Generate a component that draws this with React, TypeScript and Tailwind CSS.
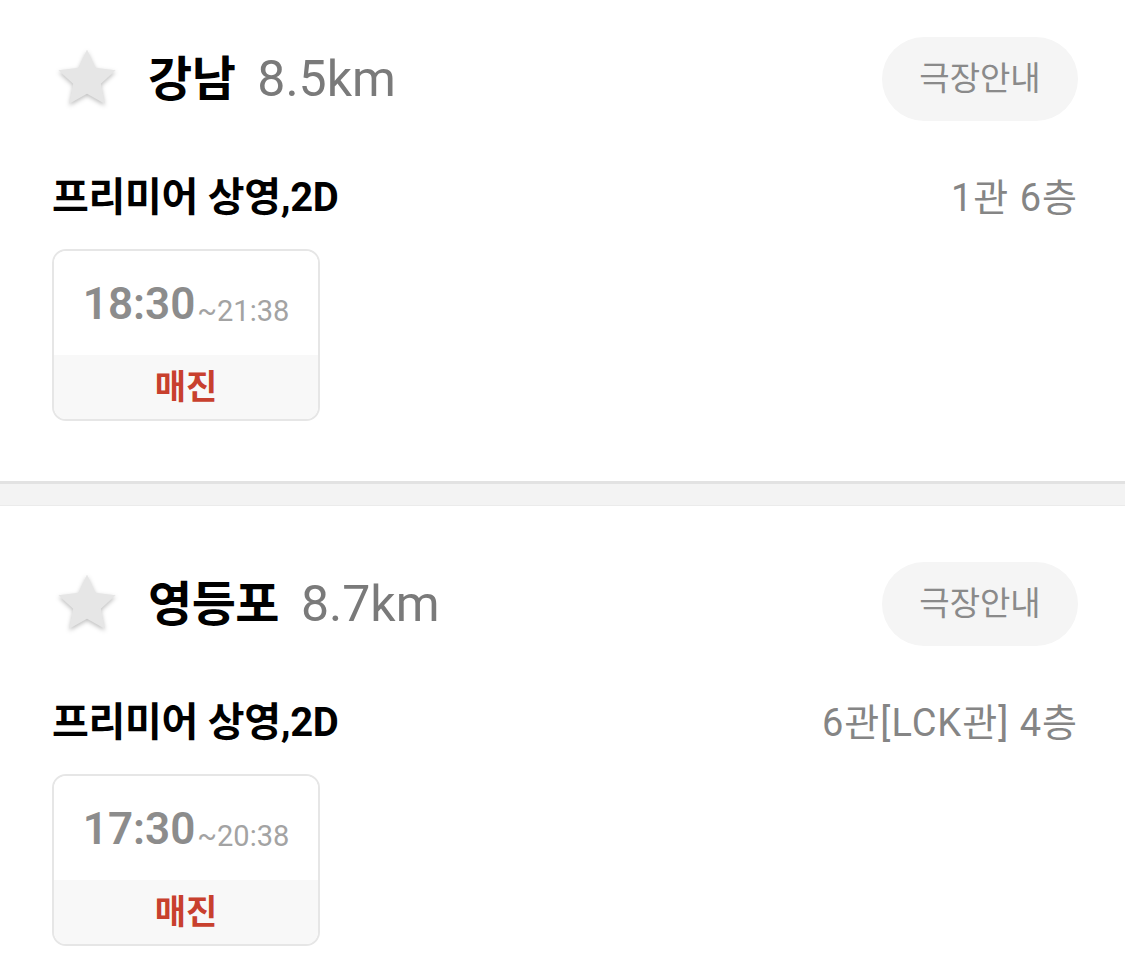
import React from "react";

const font = { fontFamily: 'Roboto, "Noto Sans CJK KR", sans-serif' };

function Star() {
  return (
    <svg width="70" height="70" viewBox="0 0 24 24" className="shrink-0" style={{ filter: "drop-shadow(0px 2px 2px rgba(0,0,0,0.25))" }}>
      <path
        d="M12 2.2l2.95 6.3 6.85.8-5.05 4.7 1.35 6.8L12 17.4l-6.1 3.4 1.35-6.8L2.2 9.3l6.85-.8z"
        fill="#e6e6e6"
        strokeLinejoin="round"
      />
    </svg>
  );
}

type Theater = { name: string; dist: string; hall: string; start: string; end: string };

function Section({ t, first }: { t: Theater; first?: boolean }) {
  return (
    <div className={`${first ? "pt-[37px]" : "pt-[56px]"} pb-[60px] pl-[52px] pr-[47px]`}>
      <div className="flex items-center h-[84px]">
        <div className="ml-0 -mt-[2px]">
          <Star />
        </div>
        <div className="ml-[26px] flex items-baseline">
          <span className="text-[48px] leading-none font-bold text-black tracking-[-0.5px]">{t.name}</span>
          <span className="ml-[22px] text-[50px] leading-none text-[#7a7a7a]">{t.dist}</span>
        </div>
        <div className="ml-auto h-[84px] w-[196px] rounded-full bg-[#f5f5f5] flex items-center justify-center text-[33px] text-[#8a8a8a]">
          극장안내
        </div>
      </div>
      <div className="mt-[57px] flex items-center justify-between h-[40px]">
        <span className="text-[40px] leading-none font-bold text-black tracking-[-0.3px]">프리미어 상영,2D</span>
        <span className="text-[38px] leading-none text-[#858585] tracking-[1px]">{t.hall}</span>
      </div>
      <div className="mt-[31px] w-[268px] h-[172px] rounded-[14px] border-2 border-[#e6e6e6] overflow-hidden flex flex-col">
        <div className="h-[104px] bg-white flex items-end justify-center pb-[29px]">
          <span className="text-[44px] font-semibold text-[#8c8c8c] leading-none">{t.start}</span>
          <span className="ml-[2px] text-[29px] text-[#a3a3a3] leading-none">~{t.end}</span>
        </div>
        <div className="flex-1 bg-[#f8f8f8] flex items-center justify-center">
          <span className="text-[34px] leading-none font-bold text-[#c8402e]">매진</span>
        </div>
      </div>
    </div>
  );
}

export default function App() {
  return (
    <div className="w-[1125px] h-[979px] bg-white overflow-hidden" style={font}>
      <Section first t={{ name: "강남", dist: "8.5km", hall: "1관 6층", start: "18:30", end: "21:38" }} />
      <div className="h-[25px] bg-[#f3f3f3] border-t-[3px] border-t-[#e2e2e2] border-b border-b-[#ebebeb]" />
      <Section t={{ name: "영등포", dist: "8.7km", hall: "6관[LCK관] 4층", start: "17:30", end: "20:38" }} />
    </div>
  );
}
